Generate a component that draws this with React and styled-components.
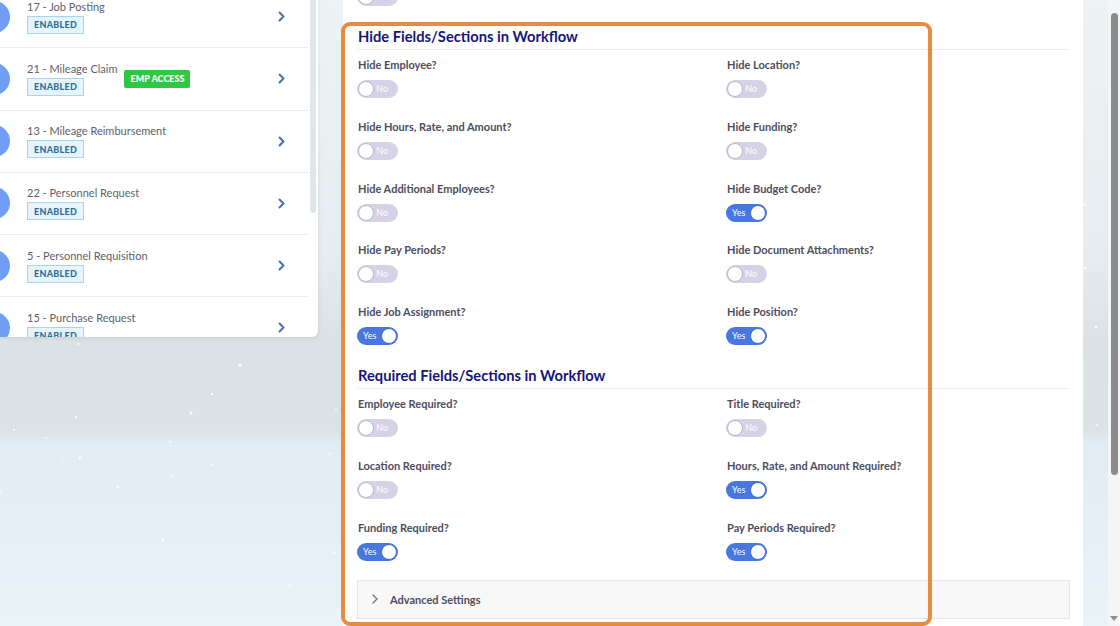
import React from "react";
import styled, { createGlobalStyle } from "styled-components";

const GlobalStyle = createGlobalStyle`
  html, body {
    margin: 0;
    padding: 0;
    height: 626px;
    overflow: hidden;
  }
  body {
    font-family: Lato, "Liberation Sans", sans-serif;
    background: linear-gradient(
      180deg,
      #edf2f5 0px,
      #e6ecef 250px,
      #dbe1e4 340px,
      #dce3e6 430px,
      #e1ecf3 445px,
      #e6f0f6 560px,
      #eaf3f8 626px
    );
  }
`;

const Page = styled.div`
  position: relative;
  display: flex;
  height: 626px;
  overflow: hidden;
`;

const Sky = styled.svg`
  position: absolute;
  inset: 0;
  pointer-events: none;
`;

const Sidebar = styled.div`
  width: 343px;
  flex-shrink: 0;
  position: relative;
`;

const Card = styled.div`
  width: 318px;
  height: 337px;
  background: #fff;
  border-radius: 0 0 6px 0;
  box-shadow: 0 1px 4px rgba(60, 80, 100, 0.12);
  overflow: hidden;
  display: flex;
`;

const List = styled.div`
  flex: 1;
  margin-top: -14px;
`;

const Row = styled.div`
  height: 62.25px;
  box-sizing: border-box;
  border-bottom: 1px solid #ececec;
  display: flex;
  align-items: center;
  padding-right: 23px;
`;

const Avatar = styled.div`
  width: 32px;
  height: 32px;
  border-radius: 50%;
  background: #6f9ef4;
  margin-left: -22px;
  flex-shrink: 0;
`;

const Info = styled.div`
  margin-left: 17px;
  display: flex;
  flex-direction: column;
  align-items: flex-start;
  gap: 2px;
`;

const ItemTitle = styled.div`
  font-size: 11px;
  line-height: 14px;
  color: #5c616b;
  white-space: nowrap;
`;

const Enabled = styled.span`
  box-sizing: border-box;
  height: 18px;
  padding: 0 6px;
  display: inline-flex;
  align-items: center;
  background: #e6f5fc;
  border: 1px solid #a9d5e8;
  color: #2d6f9c;
  font-size: 9px;
  font-weight: 900;
  letter-spacing: 0.3px;
`;

const EmpAccess = styled.span`
  margin-left: 7px;
  width: 66px;
  height: 18px;
  display: inline-flex;
  align-items: center;
  justify-content: center;
  background: #2dca41;
  border-radius: 2px;
  color: #fff;
  font-size: 9px;
  font-weight: 900;
`;

const Chevron = styled.svg`
  margin-left: auto;
  flex-shrink: 0;
`;

const CardTrack = styled.div`
  width: 6px;
  margin: 0 2px;
  display: flex;
  flex-direction: column;
`;

const CardThumb = styled.div`
  height: 213px;
  background: #dfe5e8;
  border-radius: 0 0 3px 3px;
`;

const Main = styled.div`
  width: 740px;
  flex-shrink: 0;
  background: #fff;
  box-sizing: border-box;
  padding: 0 13px 0 14px;
  position: relative;
`;

const StubToggle = styled.div`
  margin-top: -12px;
`;

const Heading = styled.h2`
  margin: 20px 0 0;
  font-size: 14.7px;
  line-height: 20px;
  font-weight: 700;
  color: #15157a;
  padding: 0 1px 3px;
  border-bottom: 1px solid #ededed;
`;

const Grid = styled.div`
  display: grid;
  grid-template-columns: 369px 1fr;
  row-gap: 21.75px;
  margin-top: 8px;
`;

const Field = styled.div`
  display: flex;
  flex-direction: column;
  align-items: flex-start;
  gap: 8px;
`;

const Label = styled.div`
  font-size: 11px;
  line-height: 14px;
  font-weight: 700;
  color: #4d4d5e;
  padding-left: 1px;
`;

const Switch = styled.div`
  box-sizing: border-box;
  width: 41px;
  height: 18px;
  border-radius: 9px;
  background: ${(p) => (p.$on ? "#4877e0" : "#d5d2e6")};
  display: flex;
  align-items: center;
  flex-direction: ${(p) => (p.$on ? "row" : "row-reverse")};
  justify-content: space-between;
  padding-left: ${(p) => (p.$on ? "6px" : "1px")};
  padding-right: ${(p) => (p.$on ? "1px" : "10px")};
`;

const SwitchText = styled.span`
  color: #fff;
  font-size: 9px;
  line-height: 10px;
  font-weight: 400;
`;

const Knob = styled.span`
  box-sizing: border-box;
  width: 16px;
  height: 16px;
  border-radius: 50%;
  background: #fff;
  border: 1px solid ${(p) => (p.$on ? "#3f6bd0" : "#b9b6c8")};
`;

const Advanced = styled.div`
  margin-top: 19px;
  height: 39px;
  box-sizing: border-box;
  background: #f8f8f8;
  border: 1px solid #e6e6e6;
  display: flex;
  align-items: center;
  padding-left: 14px;
  gap: 12px;
  font-size: 11px;
  font-weight: 700;
  color: #4d4d5e;
`;

const Gutter = styled.div`
  width: 25px;
  flex-shrink: 0;
`;

const Scrollbar = styled.div`
  width: 12px;
  flex-shrink: 0;
  background: #f3f5f6;
  display: flex;
  flex-direction: column;
  align-items: center;
  padding-top: 13px;
  box-sizing: border-box;
`;

const Thumb = styled.div`
  width: 7px;
  height: 462px;
  border-radius: 4px;
  background: #8b8b8b;
`;

const Arrow = styled.div`
  margin-top: auto;
  margin-bottom: 5px;
  width: 0;
  height: 0;
  border-left: 4px solid transparent;
  border-right: 4px solid transparent;
  border-top: 5px solid #8e8e8e;
`;

const Highlight = styled.div`
  position: absolute;
  left: 341px;
  top: 22px;
  width: 591px;
  height: 604px;
  box-sizing: border-box;
  border: 4px solid #e88b3b;
  border-radius: 9px;
  pointer-events: none;
`;

const items = [
  { title: "17 - Job Posting" },
  { title: "21 - Mileage Claim", emp: true },
  { title: "13 - Mileage Reimbursement" },
  { title: "22 - Personnel Request" },
  { title: "5 - Personnel Requisition" },
  { title: "15 - Purchase Request" },
];

const hideFields = [
  ["Hide Employee?", false],
  ["Hide Location?", false],
  ["Hide Hours, Rate, and Amount?", false],
  ["Hide Funding?", false],
  ["Hide Additional Employees?", false],
  ["Hide Budget Code?", true],
  ["Hide Pay Periods?", false],
  ["Hide Document Attachments?", false],
  ["Hide Job Assignment?", true],
  ["Hide Position?", true],
];

const requiredFields = [
  ["Employee Required?", false],
  ["Title Required?", false],
  ["Location Required?", false],
  ["Hours, Rate, and Amount Required?", true],
  ["Funding Required?", true],
  ["Pay Periods Required?", true],
];

const stars = [
  [240, 365, 1.6], [212, 394, 1.2], [191, 413, 1.4], [76, 417, 1.2], [14, 430, 1],
  [170, 442, 1], [80, 458, 1.6], [64, 458, 1], [46, 438, 1], [118, 487, 1.4],
  [172, 476, 1], [128, 472, 1], [212, 465, 1], [330, 454, 1], [163, 540, 1.4],
  [176, 528, 1], [130, 568, 1], [40, 603, 1], [290, 585, 1], [334, 553, 1.2],
  [0, 493, 1.2], [1085, 205, 1.2], [1085, 268, 1.2], [1096, 327, 1.4], [1097, 425, 1],
  [336, 410, 1], [280, 620, 1], [78, 344, 1],
];

function Toggle({ on }) {
  return (
    <Switch $on={on}>
      <SwitchText>{on ? "Yes" : "No"}</SwitchText>
      <Knob $on={on} />
    </Switch>
  );
}

function FieldGrid({ fields }) {
  return (
    <Grid>
      {fields.map(([label, on]) => (
        <Field key={label}>
          <Label>{label}</Label>
          <Toggle on={on} />
        </Field>
      ))}
    </Grid>
  );
}

export default function App() {
  return (
    <>
      <GlobalStyle />
      <Page>
        <Sky width="1120" height="626">
          {stars.map(([x, y, r], i) => (
            <circle key={i} cx={x} cy={y} r={r} fill="#fff" opacity="0.9" />
          ))}
        </Sky>
        <Sidebar>
          <Card>
            <List>
              {items.map((it) => (
                <Row key={it.title}>
                  <Avatar />
                  <Info>
                    <ItemTitle>{it.title}</ItemTitle>
                    <Enabled>ENABLED</Enabled>
                  </Info>
                  {it.emp && <EmpAccess>EMP ACCESS</EmpAccess>}
                  <Chevron width="7" height="11" viewBox="0 0 7 11">
                    <path d="M1.5 1.5 L5.5 5.5 L1.5 9.5" fill="none" stroke="#4b6fae" strokeWidth="2" strokeLinecap="round" strokeLinejoin="round" />
                  </Chevron>
                </Row>
              ))}
            </List>
            <CardTrack>
              <CardThumb />
            </CardTrack>
          </Card>
        </Sidebar>
        <Main>
          <StubToggle>
            <Toggle on={false} />
          </StubToggle>
          <Heading>Hide Fields/Sections in Workflow</Heading>
          <FieldGrid fields={hideFields} />
          <Heading>Required Fields/Sections in Workflow</Heading>
          <FieldGrid fields={requiredFields} />
          <Advanced>
            <svg width="6" height="10" viewBox="0 0 6 10">
              <path d="M1 1 L5 5 L1 9" fill="none" stroke="#6d6d7a" strokeWidth="1.2" strokeLinecap="round" />
            </svg>
            Advanced Settings
          </Advanced>
        </Main>
        <Gutter />
        <Scrollbar>
          <Thumb />
          <Arrow />
        </Scrollbar>
        <Highlight />
      </Page>
    </>
  );
}
